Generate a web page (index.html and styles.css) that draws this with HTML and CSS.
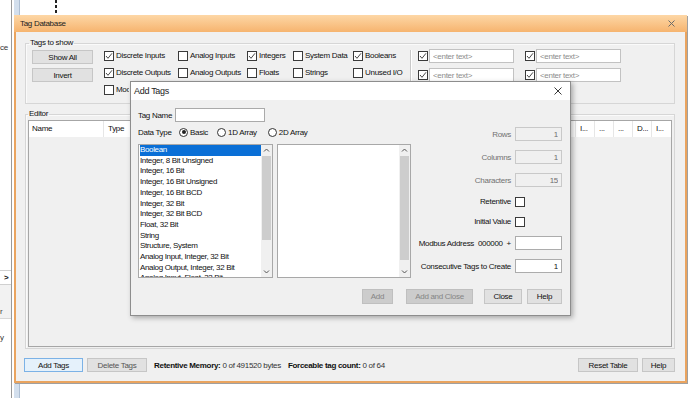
FILE: index.html
```html
<!DOCTYPE html>
<html lang="en">
<head>
  <meta charset="utf-8"/>
  <title>Tag Database</title>
  <link rel="stylesheet" href="styles.css">
</head>
<body>
  <div class="desk">
    <!-- bits of the app behind the window -->
    <div class="strip"></div>
    <div class="cursor-line"></div>
    <span class="bg-txt bg-ce">ce</span>
    <div class="bg-tab">&gt;</div>
    <div class="bg-pane">r</div>
    <span class="bg-txt bg-y">y</span>

    <div class="win">
      <div class="win-title">
        <span>Tag Database</span>
        <svg class="x" width="7" height="7" viewBox="0 0 7 7"><path d="M0.5 0.5 L6.5 6.5 M6.5 0.5 L0.5 6.5" stroke="#6a6a6a" stroke-width="1"/></svg>
      </div>
      <div class="win-body">
        <fieldset class="group show">
          <legend>Tags to show</legend>
          <div class="show-row">
            <div class="btn-col">
              <button class="btn">Show All</button>
              <button class="btn">Invert</button>
            </div>
            <div class="checks">
              <label class="check"><span class="cb on"><svg viewBox="0 0 8 8"><path d="M1 4 L3 6.3 L7 1.3" fill="none" stroke="#333" stroke-width="0.9"/></svg></span>Discrete Inputs</label>
              <label class="check"><span class="cb"></span>Analog Inputs</label>
              <label class="check"><span class="cb on"><svg viewBox="0 0 8 8"><path d="M1 4 L3 6.3 L7 1.3" fill="none" stroke="#333" stroke-width="0.9"/></svg></span>Integers</label>
              <label class="check"><span class="cb"></span>System Data</label>
              <label class="check"><span class="cb on"><svg viewBox="0 0 8 8"><path d="M1 4 L3 6.3 L7 1.3" fill="none" stroke="#333" stroke-width="0.9"/></svg></span>Booleans</label>
              <label class="check"><span class="cb on"><svg viewBox="0 0 8 8"><path d="M1 4 L3 6.3 L7 1.3" fill="none" stroke="#333" stroke-width="0.9"/></svg></span>Discrete Outputs</label>
              <label class="check"><span class="cb"></span>Analog Outputs</label>
              <label class="check"><span class="cb"></span>Floats</label>
              <label class="check"><span class="cb"></span>Strings</label>
              <label class="check"><span class="cb"></span>Unused I/O</label>
              <label class="check clip"><span class="cb"></span>Modbus</label>
            </div>
            <div class="vsep"></div>
            <div class="filters">
              <div class="filter"><span class="cb on"><svg viewBox="0 0 8 8"><path d="M1 4 L3 6.3 L7 1.3" fill="none" stroke="#333" stroke-width="0.9"/></svg></span><input type="text" placeholder="<enter text>"/></div>
              <div class="filter"><span class="cb on"><svg viewBox="0 0 8 8"><path d="M1 4 L3 6.3 L7 1.3" fill="none" stroke="#333" stroke-width="0.9"/></svg></span><input type="text" placeholder="<enter text>"/></div>
              <div class="filter"><span class="cb on"><svg viewBox="0 0 8 8"><path d="M1 4 L3 6.3 L7 1.3" fill="none" stroke="#333" stroke-width="0.9"/></svg></span><input type="text" placeholder="<enter text>"/></div>
              <div class="filter"><span class="cb on"><svg viewBox="0 0 8 8"><path d="M1 4 L3 6.3 L7 1.3" fill="none" stroke="#333" stroke-width="0.9"/></svg></span><input type="text" placeholder="<enter text>"/></div>
            </div>
          </div>
        </fieldset>

        <fieldset class="group editor">
          <legend>Editor</legend>
          <div class="table">
            <div class="thead">
              <div>Name</div>
              <div>Type</div>
              <div>I...</div>
              <div>...</div>
              <div>...</div>
              <div>D...</div>
              <div>I...</div>
            </div>
          </div>
        </fieldset>

        <div class="bottom">
          <button class="btn focus">Add Tags</button>
          <button class="btn del">Delete Tags</button>
          <span class="stat"><b>Retentive Memory:</b> 0 of 491520 bytes</span>
          <span class="stat"><b>Forceable tag count:</b> 0 of 64</span>
          <button class="btn reset">Reset Table</button>
          <button class="btn help">Help</button>
        </div>
      </div>
    </div>

    <div class="dlg">
      <div class="dlg-title">
        <span>Add Tags</span>
        <svg width="8" height="8" viewBox="0 0 8 8"><path d="M0.5 0.5 L7.5 7.5 M7.5 0.5 L0.5 7.5" stroke="#222" stroke-width="0.9"/></svg>
      </div>
      <div class="dlg-body">
        <div class="dlg-left">
          <div class="tagname">
            <span>Tag Name</span>
            <input type="text"/>
          </div>
          <div class="dtype">
            <span class="dt-label">Data Type</span>
            <label class="rad"><span class="radio on"></span>Basic</label>
            <label class="rad"><span class="radio"></span>1D Array</label>
            <label class="rad"><span class="radio"></span>2D Array</label>
          </div>
          <div class="lists">
            <div class="list types">
              <div class="items">
                <div class="sel">Boolean</div>
                <div>Integer, 8 Bit Unsigned</div>
                <div>Integer, 16 Bit</div>
                <div>Integer, 16 Bit Unsigned</div>
                <div>Integer, 16 Bit BCD</div>
                <div>Integer, 32 Bit</div>
                <div>Integer, 32 Bit BCD</div>
                <div>Float, 32 Bit</div>
                <div>String</div>
                <div>Structure, System</div>
                <div>Analog Input, Integer, 32 Bit</div>
                <div>Analog Output, Integer, 32 Bit</div>
                <div>Analog Input, Float, 32 Bit</div>
              </div>
              <div class="sbar">
                <svg class="arr" viewBox="0 0 11 11"><path d="M3 6.5 L5.5 4 L8 6.5" fill="none" stroke="#555" stroke-width="1"/></svg>
                <div class="track"><div class="thumb short"></div></div>
                <svg class="arr" viewBox="0 0 11 11"><path d="M3 4.5 L5.5 7 L8 4.5" fill="none" stroke="#555" stroke-width="1"/></svg>
              </div>
            </div>
            <div class="list">
              <div class="items"></div>
              <div class="sbar">
                <svg class="arr" viewBox="0 0 11 11"><path d="M3 6.5 L5.5 4 L8 6.5" fill="none" stroke="#555" stroke-width="1"/></svg>
                <div class="track"><div class="thumb full"></div></div>
                <svg class="arr" viewBox="0 0 11 11"><path d="M3 4.5 L5.5 7 L8 4.5" fill="none" stroke="#555" stroke-width="1"/></svg>
              </div>
            </div>
          </div>
        </div>

        <div class="dlg-right">
          <span class="lbl off">Rows</span>
          <input class="num" type="text" value="1" disabled/>
          <span class="lbl off">Columns</span>
          <input class="num" type="text" value="1" disabled/>
          <span class="lbl off">Characters</span>
          <input class="num" type="text" value="15" disabled/>
          <span class="lbl">Retentive</span>
          <span class="cb"></span>
          <span class="lbl">Initial Value</span>
          <span class="cb"></span>
          <span class="lbl">Modbus Address  000000  +</span>
          <input class="num" type="text"/>
          <span class="lbl">Consecutive Tags to Create</span>
          <input class="num" type="text" value="1"/>
        </div>
      </div>
      <div class="dlg-btns">
        <button class="btn off b-add" disabled>Add</button>
        <button class="btn off b-addclose" disabled>Add and Close</button>
        <button class="btn b-close">Close</button>
        <button class="btn b-help">Help</button>
      </div>
    </div>
  </div>
</body>
</html>
```

FILE: styles.css
```css
* {
  box-sizing: border-box;
}
body {
  margin: 0;
  font-family: "Liberation Sans", Arial, sans-serif;
  font-size: 8px;
  letter-spacing: -0.3px;
  color: #111;
  background: #fff;
}
.desk {
  position: relative;
  width: 700px;
  height: 398px;
  overflow: hidden;
}

/* background app */
.strip {
  position: absolute;
  left: 11px;
  top: 0;
  width: 10px;
  height: 398px;
  border-left: 1px solid #999;
  background: linear-gradient(90deg, #fff 0 2px, #d3dfed 2px 7px, #aebfd3 7px 8px, #fff 8px);
}
.cursor-line {
  position: absolute;
  left: 55px;
  top: 0;
  width: 2px;
  height: 13px;
  background: repeating-linear-gradient(#222 0 3px, transparent 3px 5px);
}
.bg-txt {
  position: absolute;
  left: 0;
  color: #333;
}
.bg-ce { top: 43px; }
.bg-y { top: 333px; }
.bg-tab {
  position: absolute;
  left: 0;
  top: 270px;
  width: 11px;
  height: 15px;
  border-top: 1px solid #d0d0d0;
  border-bottom: 1px solid #d0d0d0;
  padding-left: 4px;
  line-height: 13px;
  font-weight: bold;
}
.bg-pane {
  position: absolute;
  left: 0;
  top: 285px;
  width: 11px;
  height: 34px;
  background: #f2f2f2;
  border-bottom: 1px solid #d8d8d8;
  padding-top: 22px;
  color: #444;
}

/* Tag Database window */
.win {
  position: absolute;
  left: 14px;
  top: 15px;
  width: 673px;
  height: 368px;
  border: 2px solid #eaa45f;
  border-top: 0;
  box-shadow: 1px 1px 0 #a0a0a0;
  background: #f0f0f0;
  display: flex;
  flex-direction: column;
}
.win-title {
  height: 17px;
  margin: 0 -2px;
  padding: 0 12px 0 6px;
  background: linear-gradient(#fdd7a6, #f6b46f);
  display: flex;
  align-items: center;
  justify-content: space-between;
  color: #222;
}
.win-body {
  flex: 1;
  display: flex;
  flex-direction: column;
  padding: 7px 10px 9px 9px;
}
.group {
  margin: 0;
  min-width: 0;
  border: 1px solid #d6d6d6;
  box-shadow: inset 1px 1px 0 #fafafa;
}
.group legend {
  padding: 0 1px;
  line-height: 8px;
}
.show {
  padding: 0 6px 5px 6px;
}
.show legend {
  margin-left: -3px;
}
.show-row {
  display: flex;
  align-items: flex-start;
}
.btn-col {
  width: 61px;
  margin: 3px 11px 0 0;
  display: flex;
  flex-direction: column;
  gap: 4px;
}
.btn {
  height: 14px;
  padding: 0;
  border: 1px solid #c6c6c6;
  background: #e1e1e1;
  font: inherit;
  letter-spacing: inherit;
  color: #111;
}
.checks {
  display: grid;
  grid-template-columns: 74px 69px 46px 60px 52px;
  grid-auto-rows: 17px;
  align-items: center;
}
.check {
  display: flex;
  align-items: center;
  gap: 2px;
  white-space: nowrap;
}
.check.clip {
  width: 25px;
  overflow: hidden;
}
.cb {
  width: 10px;
  height: 10px;
  border: 1px solid #3a3a3a;
  background: #fff;
  display: inline-flex;
  flex: none;
}
.cb svg {
  width: 8px;
  height: 8px;
}
.vsep {
  width: 1px;
  height: 34px;
  margin: 3px 7px 0 5px;
  background: #c8c8c8;
  box-shadow: 1px 0 0 #fff;
}
.filters {
  display: grid;
  grid-template-columns: auto auto;
  column-gap: 11px;
  row-gap: 5px;
  margin-top: 2px;
}
.filter {
  display: flex;
  align-items: center;
  gap: 1px;
}
input {
  font: inherit;
  letter-spacing: inherit;
  margin: 0;
  outline: none;
}
.filter input {
  width: 85px;
  height: 14px;
  padding: 0 3px;
  border: 1px solid #c2c2c2;
  background: #fff;
}
.filter input::placeholder {
  color: #8c8c8c;
}

.editor {
  flex: 1;
  margin-top: 6px;
  padding: 2px 2px 1px;
  display: flex;
  flex-direction: column;
}
.table {
  flex: 1;
  border: 1px solid #a6a6a6;
  background: #f0f0f0;
}
.thead {
  display: grid;
  grid-template-columns: 75px 1fr repeat(5, 19px);
  height: 16px;
  background: #fff;
  line-height: 16px;
}
.thead div {
  padding-left: 4px;
  border-right: 1px solid #e6e6e6;
  overflow: hidden;
  white-space: nowrap;
}
.thead div:first-child {
  padding-left: 3px;
}
.thead div:last-child {
  border-right: 0;
}

.bottom {
  display: flex;
  align-items: center;
  height: 14px;
  margin: 9px 0 0 -1px;
}
.bottom .btn.focus {
  width: 59px;
  background: #e5f1fb;
  border-color: #7cb2e6;
}
.bottom .btn.del {
  width: 60px;
  margin-left: 4px;
  color: #555;
}
.stat {
  margin-left: 7px;
  white-space: nowrap;
  color: #333;
}
.stat b {
  color: #111;
}
.bottom .btn.reset {
  width: 60px;
  margin-left: auto;
}
.bottom .btn.help {
  width: 33px;
  margin-left: 4px;
}

/* Add Tags dialog */
.dlg {
  position: absolute;
  left: 130px;
  top: 81px;
  width: 441px;
  height: 235px;
  border: 1px solid #8d8d8d;
  background: #f0f0f0;
  box-shadow: 2px 2px 5px rgba(0, 0, 0, 0.3);
}
.dlg-title {
  height: 18px;
  padding: 0 8px 0 3px;
  background: #fff;
  display: flex;
  align-items: center;
  justify-content: space-between;
  font-size: 9px;
  color: #222;
}
.dlg-body {
  display: flex;
  padding: 8px 8px 0 7px;
}
.dlg-left {
  width: 273px;
}
.tagname {
  display: flex;
  align-items: center;
  height: 14px;
}
.tagname span {
  width: 37px;
}
.tagname input {
  width: 90px;
  height: 14px;
  border: 1px solid #aaa;
  background: #fff;
  padding: 0 2px;
}
.dtype {
  display: flex;
  align-items: center;
  height: 12px;
  margin-top: 4px;
}
.dt-label {
  width: 41px;
}
.rad {
  display: flex;
  align-items: center;
  gap: 2px;
  margin-right: 9px;
}
.rad:nth-child(3) {
  margin-right: 11px;
}
.radio {
  width: 9px;
  height: 9px;
  border-radius: 50%;
  border: 1px solid #333;
  background: #fff;
  display: flex;
  align-items: center;
  justify-content: center;
}
.radio.on::after {
  content: "";
  width: 4px;
  height: 4px;
  border-radius: 50%;
  background: #222;
}
.lists {
  display: flex;
  gap: 4px;
  margin-top: 6px;
}
.list {
  width: 134px;
  height: 134px;
  border: 1px solid #a8a8a8;
  background: #fff;
  display: flex;
}
.list.types {
  width: 135px;
}
.items {
  flex: 1;
  overflow: hidden;
  line-height: 10.7px;
  white-space: nowrap;
}
.items div {
  padding-left: 1px;
  letter-spacing: -0.35px;
}
.items .sel {
  background: #0a6fd6;
  color: #fff;
  margin-left: 1px;
  padding-left: 0;
}
.sbar {
  width: 11px;
  display: flex;
  flex-direction: column;
  background: #f0f0f0;
}
.arr {
  width: 11px;
  height: 11px;
  flex: none;
}
.track {
  flex: 1;
  position: relative;
}
.thumb {
  margin: 0 1px;
  background: #cdcdcd;
}
.thumb.short {
  height: 84px;
}
.thumb.full {
  height: 104px;
}

.dlg-right {
  flex: 1;
  display: grid;
  grid-template-columns: 1fr 47px;
  grid-template-rows: 14px 14px 14px 11px 11px 14px 14px;
  column-gap: 4px;
  row-gap: 9px;
  align-items: center;
  padding-top: 19px;
}
.lbl {
  justify-self: end;
  white-space: pre;
  color: #111;
}
.lbl.off {
  color: #707070;
}
.dlg-right .cb {
  justify-self: start;
}
.num {
  width: 47px;
  height: 14px;
  border: 1px solid #acacac;
  background: #fff;
  text-align: right;
  padding: 0 3px;
  color: #111;
}
.num:disabled {
  background: #f0f0f0;
  border-color: #c9c9c9;
  color: #6d6d6d;
}
.dlg-btns {
  display: flex;
  justify-content: flex-end;
  margin-top: 11px;
  padding-right: 8px;
}
.dlg-btns .btn {
  height: 15px;
}
.btn.off {
  background: #cccccc;
  border-color: #bfbfbf;
  color: #858585;
}
.b-add {
  width: 31px;
  margin-right: 13px;
}
.b-addclose {
  width: 67px;
  margin-right: 11px;
}
.b-close {
  width: 38px;
  margin-right: 5px;
}
.b-help {
  width: 35px;
}
```
